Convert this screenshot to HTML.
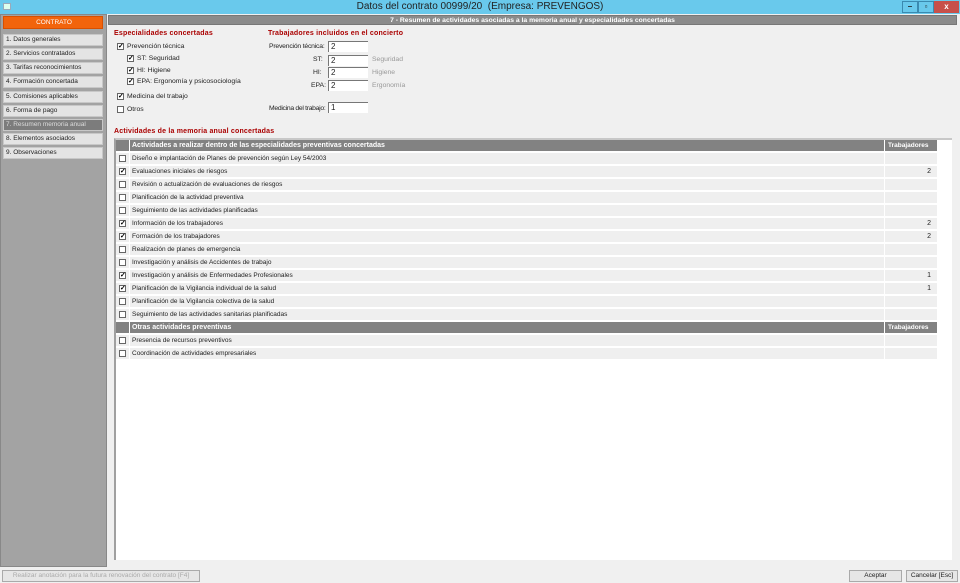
<!DOCTYPE html>
<html><head><meta charset="utf-8"><style>
*{margin:0;padding:0;box-sizing:border-box}
body{width:960px;height:583px;overflow:hidden;background:#f0f0f0;font-family:"Liberation Sans",sans-serif;font-size:7px;color:#222;position:relative}
.abs{position:absolute}
#title{left:0;top:0;width:960px;height:14px;background:#69c9ec;text-align:center;font-size:10px;line-height:14px;color:#222}
#left{left:0;top:14px;width:107px;height:553px;background:#a3a3a3;border:1px solid #888}
.nav{position:absolute;left:3px;width:100px;height:12px;background:#e4e4e4;border:1px solid #c8c8c8;font-size:6.5px;line-height:10px;padding-left:2px;color:#222}
.nav.sel{background:#7c7c7c;color:#ddd}
#hdr{left:108px;top:15px;width:849px;height:10px;background:#8b8b8b;color:#fff;font-weight:bold;text-align:center;font-size:6.8px;line-height:9px;border:1px solid #777}
.lbl{position:absolute;font-size:6.8px;white-space:nowrap}
.lbl.red{color:#a00;font-weight:bold;font-size:7px;letter-spacing:0.2px}
.cb{position:absolute;width:7px;height:7px;border:1px solid #666;background:#fff;font-size:7px;line-height:5px;text-align:center;font-weight:bold;color:#000}
.inp{position:absolute;width:40px;height:11px;background:#fff;border-top:1px solid #777;border-left:1px solid #777;font-size:8px;line-height:10px;padding-left:2px}
.gray{color:#999}
#panel{left:114px;top:138px;width:838px;height:422px;background:#fff;border-left:2px solid #a0a0a0;border-top:2px solid #c8c8c8}
.row{position:absolute;left:116px;height:11px}
.row .c0,.row .c1,.row .c2{position:absolute;top:0;height:11px;background:#efefef}
.row .c0{left:0;width:13px}
.row .c1{left:14px;width:754px;padding-left:2px;line-height:11px;font-size:6.5px}
.row .c2{left:769px;width:52px;text-align:right;padding-right:6px;line-height:11px}
.row.h .c0,.row.h .c1,.row.h .c2{background:#828282;color:#fff;font-weight:bold;font-size:7px}
.row.h .c2{text-align:left;padding-left:3px;font-size:6.5px}
.row .cb{left:3px;top:2px}
.btn{position:absolute;height:12px;border:1px solid #aaa;background:#e6e6e6;font-size:6.5px;line-height:10px;text-align:center}
</style></head><body>
<div id="title" class="abs">Datos del contrato 00999/20 &nbsp;(Empresa: PREVENGOS)</div>
<div class="abs" style="left:3px;top:3px;width:8px;height:7px;background:#dfe;border:1px solid #9ab"></div>
<div class="abs" style="left:902px;top:1px;width:16px;height:12px;border:1px solid #3a8ab0;background:#69c9ec;font-size:8px;line-height:9px;text-align:center;font-weight:bold">–</div>
<div class="abs" style="left:918px;top:1px;width:16px;height:12px;border:1px solid #3a8ab0;background:#69c9ec;font-size:8px;line-height:10px;text-align:center;font-weight:bold">▫</div>
<div class="abs" style="left:934px;top:1px;width:25px;height:12px;background:#c7504a;color:#fff;font-size:8px;line-height:11px;text-align:center;font-weight:bold">x</div>

<div id="left" class="abs"></div>
<div class="nav" style="top:16px;height:13px;background:#f2640c;color:#fff;text-align:center;border-color:#d85000;line-height:11px">CONTRATO</div>
<div class="nav" style="top:34px">1. Datos generales</div>
<div class="nav" style="top:48px">2. Servicios contratados</div>
<div class="nav" style="top:62px">3. Tarifas reconocimientos</div>
<div class="nav" style="top:76px">4. Formación concertada</div>
<div class="nav" style="top:91px">5. Comisiones aplicables</div>
<div class="nav" style="top:105px">6. Forma de pago</div>
<div class="nav sel" style="top:119px">7. Resumen memoria anual</div>
<div class="nav" style="top:133px">8. Elementos asociados</div>
<div class="nav" style="top:147px">9. Observaciones</div>

<div id="hdr" class="abs">7 - Resumen de actividades asociadas a la memoria anual y especialidades concertadas</div>

<div class="lbl red" style="left:114px;top:30px">Especialidades concertadas</div>
<div class="cb" style="left:117px;top:43px">✓</div><div class="lbl" style="left:127px;top:43px">Prevención técnica</div>
<div class="cb" style="left:127px;top:55px">✓</div><div class="lbl" style="left:137px;top:55px">ST: Seguridad</div>
<div class="cb" style="left:127px;top:67px">✓</div><div class="lbl" style="left:137px;top:67px">HI: Higiene</div>
<div class="cb" style="left:127px;top:78px">✓</div><div class="lbl" style="left:137px;top:78px">EPA: Ergonomía y psicosociología</div>
<div class="cb" style="left:117px;top:93px">✓</div><div class="lbl" style="left:127px;top:93px">Medicina del trabajo</div>
<div class="cb" style="left:117px;top:106px"></div><div class="lbl" style="left:127px;top:106px">Otros</div>

<div class="lbl red" style="left:268px;top:30px">Trabajadores incluidos en el concierto</div>
<div class="lbl" style="left:269px;top:43px;letter-spacing:-0.2px">Prevención técnica:</div><div class="inp" style="left:328px;top:41px">2</div>
<div class="lbl" style="left:313px;top:56px">ST:</div><div class="inp" style="left:328px;top:55px">2</div><div class="lbl gray" style="left:372px;top:56px">Seguridad</div>
<div class="lbl" style="left:313px;top:69px">HI:</div><div class="inp" style="left:328px;top:67px">2</div><div class="lbl gray" style="left:372px;top:69px">Higiene</div>
<div class="lbl" style="left:311px;top:82px">EPA:</div><div class="inp" style="left:328px;top:80px">2</div><div class="lbl gray" style="left:372px;top:82px">Ergonomía</div>
<div class="lbl" style="left:269px;top:105px;letter-spacing:-0.3px">Medicina del trabajo:</div><div class="inp" style="left:328px;top:102px">1</div>

<div class="lbl red" style="left:114px;top:128px">Actividades de la memoria anual concertadas</div>
<div id="panel" class="abs"></div>

<div class="row h" style="top:140px"><div class="c0"></div><div class="c1">Actividades a realizar dentro de las especialidades preventivas concertadas</div><div class="c2">Trabajadores</div></div>
<div class="row" style="top:153px"><div class="c0"><div class="cb"></div></div><div class="c1">Diseño e implantación de Planes de prevención según Ley 54/2003</div><div class="c2"></div></div>
<div class="row" style="top:166px"><div class="c0"><div class="cb">✓</div></div><div class="c1">Evaluaciones iniciales de riesgos</div><div class="c2">2</div></div>
<div class="row" style="top:179px"><div class="c0"><div class="cb"></div></div><div class="c1">Revisión o actualización de evaluaciones de riesgos</div><div class="c2"></div></div>
<div class="row" style="top:192px"><div class="c0"><div class="cb"></div></div><div class="c1">Planificación de la actividad preventiva</div><div class="c2"></div></div>
<div class="row" style="top:205px"><div class="c0"><div class="cb"></div></div><div class="c1">Seguimiento de las actividades planificadas</div><div class="c2"></div></div>
<div class="row" style="top:218px"><div class="c0"><div class="cb">✓</div></div><div class="c1">Información de los trabajadores</div><div class="c2">2</div></div>
<div class="row" style="top:231px"><div class="c0"><div class="cb">✓</div></div><div class="c1">Formación de los trabajadores</div><div class="c2">2</div></div>
<div class="row" style="top:244px"><div class="c0"><div class="cb"></div></div><div class="c1">Realización de planes de emergencia</div><div class="c2"></div></div>
<div class="row" style="top:257px"><div class="c0"><div class="cb"></div></div><div class="c1">Investigación y análisis de Accidentes de trabajo</div><div class="c2"></div></div>
<div class="row" style="top:270px"><div class="c0"><div class="cb">✓</div></div><div class="c1">Investigación y análisis de Enfermedades Profesionales</div><div class="c2">1</div></div>
<div class="row" style="top:283px"><div class="c0"><div class="cb">✓</div></div><div class="c1">Planificación de la Vigilancia individual de la salud</div><div class="c2">1</div></div>
<div class="row" style="top:296px"><div class="c0"><div class="cb"></div></div><div class="c1">Planificación de la Vigilancia colectiva de la salud</div><div class="c2"></div></div>
<div class="row" style="top:309px"><div class="c0"><div class="cb"></div></div><div class="c1">Seguimiento de las actividades sanitarias planificadas</div><div class="c2"></div></div>
<div class="row h" style="top:322px"><div class="c0"></div><div class="c1">Otras actividades preventivas</div><div class="c2">Trabajadores</div></div>
<div class="row" style="top:335px"><div class="c0"><div class="cb"></div></div><div class="c1">Presencia de recursos preventivos</div><div class="c2"></div></div>
<div class="row" style="top:348px"><div class="c0"><div class="cb"></div></div><div class="c1">Coordinación de actividades empresariales</div><div class="c2"></div></div>

<div class="btn" style="left:2px;top:570px;width:198px;color:#aaa">Realizar anotación para la futura renovación del contrato [F4]</div>
<div class="btn" style="left:849px;top:570px;width:53px">Aceptar</div>
<div class="btn" style="left:906px;top:570px;width:52px">Cancelar [Esc]</div>
</body></html>
